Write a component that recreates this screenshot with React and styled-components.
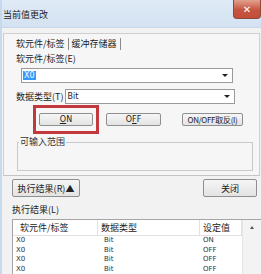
import React from "react";
import styled, { createGlobalStyle } from "styled-components";

const GlobalStyle = createGlobalStyle`
  html, body { margin: 0; padding: 0; background: #f0f0f0; }
  body { font-family: "Noto Sans CJK SC", "DejaVu Sans", sans-serif; }
`;

const cjk = `"Noto Sans CJK SC", sans-serif`;
const latin = `"DejaVu Sans", "Noto Sans CJK SC", sans-serif`;

const Window = styled.div`
  position: relative;
  width: 261px;
  height: 274px;
  overflow: hidden;
  background: #f2f2f2;
  border-left: 2px solid #c7d9ec;
  box-sizing: border-box;
`;

const TitleBar = styled.div`
  height: 28px;
  display: flex;
  align-items: flex-start;
  justify-content: space-between;
  background: linear-gradient(#dfeaf6, #d3e2f2);
  border-bottom: 1px solid #c9d8e8;
  box-sizing: border-box;
`;

const Title = styled.span`
  font-family: ${cjk};
  font-size: 9px;
  line-height: 12px;
  margin: 9px 0 0 1px;
  color: #222;
`;

const CloseBtn = styled.div`
  width: 28px;
  height: 19px;
  display: flex;
  align-items: center;
  justify-content: center;
  background: linear-gradient(#e2a18e, #c6553f 55%, #c34e39);
  border: 1px solid #8e4a3e;
  border-top: none;
  border-radius: 0 0 4px 4px;
  box-sizing: border-box;
  color: #fff;
  font-family: ${latin};
  font-size: 10px;
  font-weight: bold;
`;

const Frame = styled.div`
  margin: 5px 1px 0 1px;
  height: 143px;
  border: 1px solid #cfcfcf;
  border-bottom-color: #c4c4c4;
  background: #f6f6f6;
  padding: 2px 0 0 12px;
  box-sizing: border-box;
`;

const Tabs = styled.div`
  display: flex;
  align-items: center;
  height: 15px;
  gap: 3px;
`;

const Tab = styled.span`
  font-family: ${cjk};
  font-size: 9px;
  line-height: 12px;
  color: #222;
  padding-right: 3px;
  border-right: 1px solid #8a8a8a;
`;

const FieldLabel = styled.div`
  font-family: ${cjk};
  font-size: 9px;
  line-height: 12px;
  color: #222;
  margin-top: ${(p) => p.$top || 0}px;
`;

const Row = styled.div`
  display: flex;
  align-items: center;
  margin-top: ${(p) => p.$top || 0}px;
  margin-left: ${(p) => p.$left || 0}px;
  gap: ${(p) => p.$gap || 0}px;
`;

const Combo = styled.div`
  width: ${(p) => p.$w}px;
  height: 15px;
  display: flex;
  align-items: center;
  margin-left: ${(p) => p.$ml || 0}px;
  background: #fff;
  border: 1px solid #9a9a9a;
  box-sizing: border-box;
  padding: 0 0 0 1px;
`;

const ComboText = styled.span`
  flex: 1;
  font-family: ${latin};
  font-size: 8px;
  line-height: 11px;
  color: ${(p) => (p.$sel ? "#fff" : "#222")};
  span {
    background: ${(p) => (p.$sel ? "#3399ff" : "transparent")};
    padding: 0 1px;
  }
`;

const Arrow = styled.div`
  width: 0;
  height: 0;
  margin-right: 4px;
  border-left: 3px solid transparent;
  border-right: 3px solid transparent;
  border-top: 3px solid #222;
`;

const Highlight = styled.div`
  padding: 5px 3px;
  border: 3px solid #c2393d;
`;

const Button = styled.div`
  width: ${(p) => p.$w}px;
  height: ${(p) => p.$h || 13}px;
  margin-left: ${(p) => p.$ml || 0}px;
  display: flex;
  align-items: center;
  justify-content: center;
  white-space: nowrap;
  background: linear-gradient(#f6f6f6, #e3e3e3);
  border: 1px solid #8e8f8f;
  border-radius: 2px;
  box-sizing: border-box;
  font-family: ${(p) => (p.$cjk ? cjk : latin)};
  font-size: ${(p) => p.$fs || (p.$cjk ? 9 : 8)}px;
  letter-spacing: ${(p) => p.$ls || 0}px;
  color: #222;
  u { text-decoration: underline; }
`;

const Group = styled.fieldset`
  margin: 3px 6px 0 1px;
  height: 34px;
  padding: 0;
  border: 1px solid #c9c9c9;
  box-sizing: border-box;
  legend {
    font-family: ${cjk};
    font-size: 9px;
    line-height: 10px;
    color: #333;
    padding: 0 1px;
    margin-left: 1px;
  }
`;

const BottomBar = styled.div`
  display: flex;
  justify-content: space-between;
  margin: 3px 4px 0 10px;
`;

const ResultLabel = styled.div`
  font-family: ${cjk};
  font-size: 9px;
  line-height: 12px;
  color: #222;
  margin: 7px 0 0 10px;
`;

const List = styled.div`
  margin: 3px 0 0 10px;
  border: 1px solid #a5a5a5;
  border-right: none;
  background: #fff;
  height: 60px;
  display: flex;
`;

const ListBody = styled.div`
  flex: 1;
`;

const HeadRow = styled.div`
  display: grid;
  grid-template-columns: 85px 102px 1fr;
  height: 15px;
  border-bottom: 1px solid #e0e0e0;
  align-items: center;
`;

const HeadCell = styled.div`
  font-family: ${cjk};
  font-size: 9px;
  line-height: 12px;
  color: #222;
  padding-left: ${(p) => p.$pad || 3}px;
  border-right: 1px solid #e2e2e2;
  height: 15px;
  display: flex;
  align-items: center;
`;

const DataRow = styled.div`
  display: grid;
  grid-template-columns: 85px 102px 1fr;
  height: 9.5px;
  align-items: center;
`;

const Cell = styled.div`
  font-family: ${latin};
  font-size: 7px;
  line-height: 9px;
  color: #333;
  padding-left: ${(p) => p.$pad || 3}px;
`;

const Scroll = styled.div`
  width: 18px;
  border-left: 1px solid #e4e4e4;
  background: #f3f3f3;
  display: flex;
  flex-direction: column;
  align-items: center;
`;

const ScrollUp = styled.div`
  margin-top: 6px;
  width: 0;
  height: 0;
  border-left: 2px solid transparent;
  border-right: 2px solid transparent;
  border-bottom: 3px solid #555;
`;

const rows = [
  ["X0", "Bit", "ON"],
  ["X0", "Bit", "OFF"],
  ["X0", "Bit", "OFF"],
  ["X0", "Bit", "OFF"],
];

export default function App() {
  return (
    <>
      <GlobalStyle />
      <Window>
        <TitleBar>
          <Title>当前值更改</Title>
          <CloseBtn>✕</CloseBtn>
        </TitleBar>
        <Frame>
          <Tabs>
            <Tab>软元件/标签</Tab>
            <Tab>缓冲存储器</Tab>
          </Tabs>
          <FieldLabel $top={2}>软元件/标签(E)</FieldLabel>
          <Row $top={3} $left={5}>
            <Combo $w={212}>
              <ComboText $sel><span>X0</span></ComboText>
              <Arrow />
            </Combo>
          </Row>
          <Row $top={6}>
            <FieldLabel>数据类型(T)</FieldLabel>
            <Combo $w={170} $ml={2}>
              <ComboText>Bit</ComboText>
              <Arrow />
            </Combo>
          </Row>
          <Row $top={1} $left={17} $gap={7}>
            <Highlight>
              <Button $w={54}><u>O</u>N</Button>
            </Highlight>
            <Button $w={55}>O<u>F</u>F</Button>
            <Button $w={61} $ml={14} $cjk $fs={8} $ls={-0.3}>ON/OFF取反(I)</Button>
          </Row>
          <Group>
            <legend>可输入范围</legend>
          </Group>
        </Frame>
        <BottomBar>
          <Button $w={68} $h={18} $cjk>执行结果(R)▲</Button>
          <Button $w={54} $h={18} $cjk>关闭</Button>
        </BottomBar>
        <ResultLabel>执行结果(L)</ResultLabel>
        <List>
          <ListBody>
            <HeadRow>
              <HeadCell $pad={7}>软元件/标签</HeadCell>
              <HeadCell>数据类型</HeadCell>
              <HeadCell>设定值</HeadCell>
            </HeadRow>
            {rows.map((r, i) => (
              <DataRow key={i}>
                <Cell>{r[0]}</Cell>
                <Cell $pad={6}>{r[1]}</Cell>
                <Cell $pad={3}>{r[2]}</Cell>
              </DataRow>
            ))}
          </ListBody>
          <Scroll>
            <ScrollUp />
          </Scroll>
        </List>
      </Window>
    </>
  );
}
